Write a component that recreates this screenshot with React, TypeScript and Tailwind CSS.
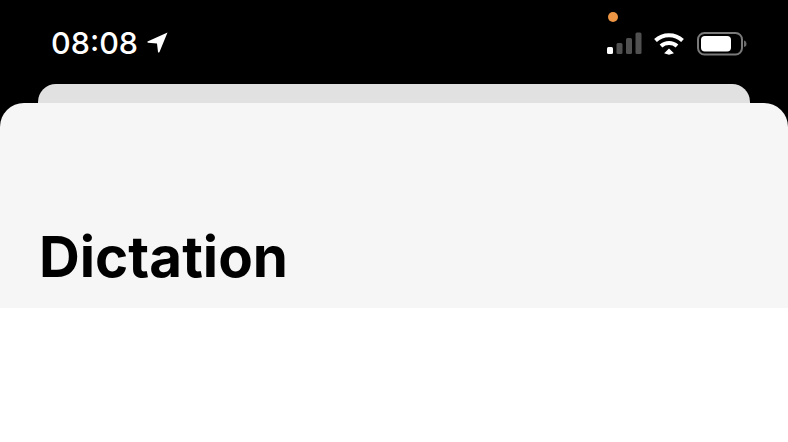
export default function App() {
  return (
    <div className="relative flex h-[442px] w-[788px] flex-col overflow-hidden bg-black font-['Inter',sans-serif]">
      <span className="absolute left-[608px] top-[12px] h-[10px] w-[10px] rounded-full bg-[#ec9544]" />
      <div className="flex h-[84px] items-start justify-between pl-[51px] pr-[40px] pt-[26px]">
        <div className="flex items-center gap-[9px] text-white">
          <span className="text-[30.5px] font-medium leading-[34px]">08:08</span>
          <svg width="21" height="21" viewBox="0 0 21 21" className="mt-[-1px]">
            <path d="M20.5 0.5 L0.5 9.5 Q0 10.5 1 10.8 L10 11.5 L11 20 Q11.5 21 12.5 20 Z" fill="#fff" />
          </svg>
        </div>
        <div className="flex items-start pt-[6px]">
          <svg width="36" height="23" viewBox="0 0 36 23">
            <rect x="1" y="15" width="6" height="7" rx="1.5" fill="#fff" />
            <rect x="10.5" y="11" width="6" height="11" rx="1.5" fill="#505050" />
            <rect x="20" y="6" width="6" height="16" rx="1.5" fill="#505050" />
            <rect x="29.5" y="0.5" width="6" height="21.5" rx="1.5" fill="#505050" />
          </svg>
          <svg width="32" height="23" viewBox="0 0 32 23" className="ml-[11px]" fill="none" stroke="#fff" strokeWidth="4">
            <path d="M2.5 8.5 C10 1.5 22 1.5 29.5 8.5" />
            <path d="M8 14 C12.5 10 19.5 10 24 14" />
            <path d="M12.5 22 L16 18.5 L19.5 22 L16 23 Z" fill="#fff" stroke="#fff" strokeWidth="1.5" transform="translate(0,-1)" />
          </svg>
          <svg width="52" height="24" viewBox="0 0 52 24" className="ml-[11px]">
            <rect x="2" y="1" width="44" height="21.5" rx="6.5" fill="none" stroke="#7a7a7a" strokeWidth="2" />
            <rect x="5" y="4" width="30" height="15.5" rx="4" fill="#fff" />
            <path d="M48 8.5 C50 9 50.5 10.5 50.5 12 C50.5 13.5 50 14.5 48 15 Z" fill="#6a6a6a" />
          </svg>
        </div>
      </div>
      <div className="mx-[38px] h-[19px] rounded-t-[18px] bg-[#e1e1e1]" />
      <div className="flex h-[205px] items-end rounded-t-[24px] bg-[#f7f6f7] px-[39px] pb-[19px]">
        <h1 className="text-[56.5px] font-bold leading-[64px] text-black">Dictation</h1>
      </div>
      <div className="flex-1 bg-white" />
    </div>
  );
}
